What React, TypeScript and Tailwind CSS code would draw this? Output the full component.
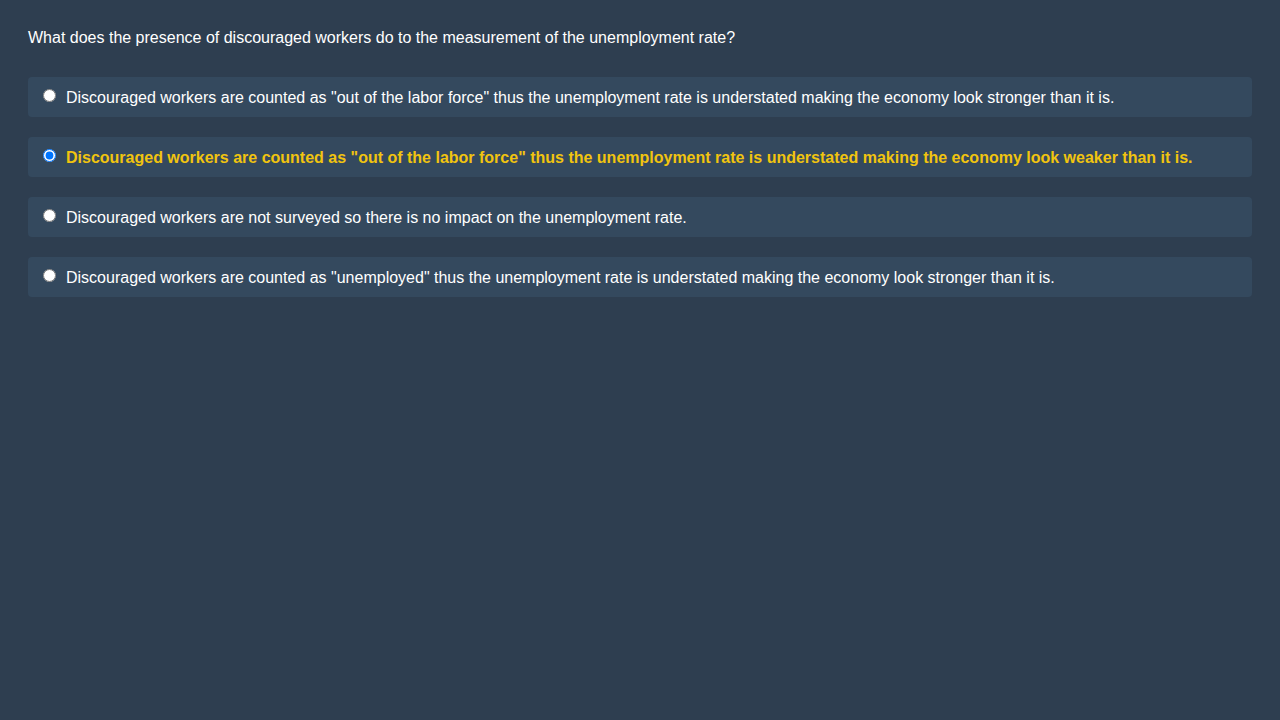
const options = [
  'Discouraged workers are counted as "out of the labor force" thus the unemployment rate is understated making the economy look stronger than it is.',
  'Discouraged workers are counted as "out of the labor force" thus the unemployment rate is understated making the economy look weaker than it is.',
  "Discouraged workers are not surveyed so there is no impact on the unemployment rate.",
  'Discouraged workers are counted as "unemployed" thus the unemployment rate is understated making the economy look stronger than it is.',
];

export default function App() {
  return (
    <div className="min-h-screen bg-[#2e3e50] px-[28px] pt-[29px] font-['Liberation_Sans',Arial,sans-serif] text-white">
      {/* Question */}
      <p className="text-[16px] leading-[18px] mb-[30px]">
        What does the presence of discouraged workers do to the measurement of the unemployment rate?
      </p>

      {/* Answer options */}
      <div className="flex flex-col gap-5">
        {options.map((text, i) => {
          const selected = i === 1;
          return (
            <label
              key={i}
              className="flex items-start rounded bg-[#34495e] px-[15px] pt-[12px] pb-[10px]"
            >
              <input
                type="radio"
                name="answer"
                defaultChecked={selected}
                className="m-0 h-[13px] w-[13px] shrink-0"
              />
              <span
                className={
                  selected
                    ? "ml-[10px] text-[16px] leading-[18px] font-bold text-[#f1c40f]"
                    : "ml-[10px] text-[16px] leading-[18px] text-white"
                }
              >
                {text}
              </span>
            </label>
          );
        })}
      </div>
    </div>
  );
}
